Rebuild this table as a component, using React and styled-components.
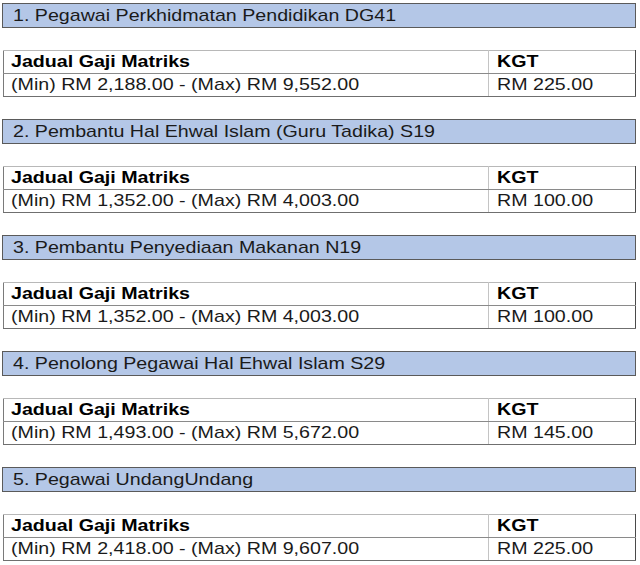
import React from "react";
import styled, { createGlobalStyle } from "styled-components";

const jobs = [
  { title: "1. Pegawai Perkhidmatan Pendidikan DG41", min: "2,188.00", max: "9,552.00", kgt: "225.00" },
  { title: "2. Pembantu Hal Ehwal Islam (Guru Tadika) S19", min: "1,352.00", max: "4,003.00", kgt: "100.00" },
  { title: "3. Pembantu Penyediaan Makanan N19", min: "1,352.00", max: "4,003.00", kgt: "100.00" },
  { title: "4. Penolong Pegawai Hal Ehwal Islam S29", min: "1,493.00", max: "5,672.00", kgt: "145.00" },
  { title: "5. Pegawai UndangUndang", min: "2,418.00", max: "9,607.00", kgt: "225.00" },
];

function App() {
  return (
    <>
      <GlobalStyle />
      <Page>
        {jobs.map((job) => (
          <Section key={job.title}>
            <TitleBar>
              <Wide>{job.title}</Wide>
            </TitleBar>
            <SalaryTable>
              <tbody>
                <tr>
                  <Cell bold>
                    <Wide>Jadual Gaji Matriks</Wide>
                  </Cell>
                  <Cell bold side>
                    <Wide>KGT</Wide>
                  </Cell>
                </tr>
                <tr>
                  <Cell bottom>
                    <Wide>
                      (Min) RM {job.min} - (Max) RM {job.max}
                    </Wide>
                  </Cell>
                  <Cell bottom side>
                    <Wide>RM {job.kgt}</Wide>
                  </Cell>
                </tr>
              </tbody>
            </SalaryTable>
          </Section>
        ))}
      </Page>
    </>
  );
}

const GlobalStyle = createGlobalStyle`
  body {
    margin: 0;
    background: #ffffff;
    font-family: "Liberation Sans", Arial, sans-serif;
    color: #111111;
  }
`;

const Page = styled.div`
  display: flex;
  flex-direction: column;
  gap: 22px;
  padding: 3px 4px 0 2px;
`;

const Section = styled.div`
  display: flex;
  flex-direction: column;
  gap: 22px;
`;

// the source text is rendered a little stretched horizontally
const Wide = styled.span`
  display: inline-block;
  transform: scaleX(1.155);
  transform-origin: left center;
  white-space: nowrap;
`;

const TitleBar = styled.div`
  height: 23px;
  display: flex;
  align-items: center;
  padding-left: 10px;
  background-color: #b4c7e7;
  border: 1px solid #5a5a5a;
  font-size: 17px;
  color: #1a1a1a;
`;

const SalaryTable = styled.table`
  margin-left: 1px;
  width: 633px;
  border-collapse: collapse;
  border-top: 1px solid #b8b8b8;
  border-left: 1px solid #7a7a7a;
  border-right: 1px solid #4a4a4a;
`;

const Cell = styled.td`
  height: 22px;
  padding: 0 0 0 7px;
  font-size: 17px;
  font-weight: ${(p) => (p.bold ? "bold" : "normal")};
  color: ${(p) => (p.bold ? "#000000" : "#1a1a1a")};
  border-bottom: 1px solid ${(p) => (p.bottom ? "#6f6f6f" : "#8a8a8a")};
  width: ${(p) => (p.side ? "138px" : "auto")};
  border-left: ${(p) => (p.side ? "1px solid #c4c4c4" : "none")};
  padding-left: ${(p) => (p.side ? "8px" : "7px")};
  white-space: nowrap;
  line-height: 22px;
`;

export default App;
